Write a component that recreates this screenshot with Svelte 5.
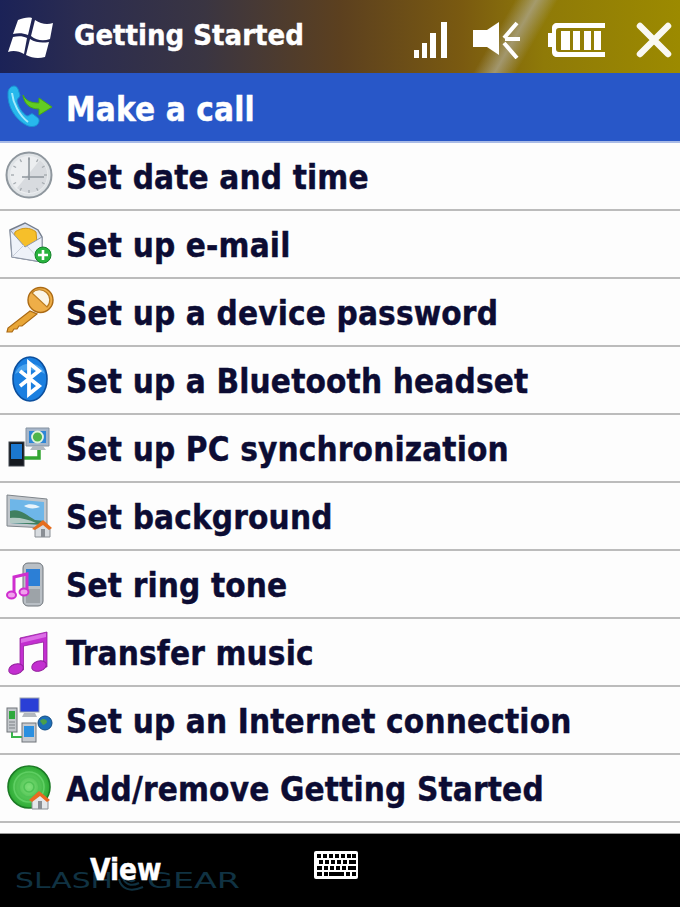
<script>
	const rows = [
		['Make a call', phone, true],
		['Set date and time', clock],
		['Set up e-mail', mail],
		['Set up a device password', key],
		['Set up a Bluetooth headset', bluetooth],
		['Set up PC synchronization', sync],
		['Set background', picture],
		['Set ring tone', ringtone],
		['Transfer music', music],
		['Set up an Internet connection', internet],
		['Add/remove Getting Started', addremove]
	];
	const ticks = [0, 30, 60, 90, 120, 150, 180, 210, 240, 270, 300, 330];
</script>

{#snippet phone()}
	<g transform="translate(0 -1)">
		<path d="M8 20c0-4 3-7 6-7 2 0 3 1 4 3l2 6c0 3-3 3-3 6 1 5 5 12 10 15 3 0 3-3 6-2l5 4c2 2 1 5-1 7-3 2-7 2-11 0C15 46 7 33 8 20z" fill="#27b8ec" stroke="#1a90d2" />
		<path d="M12 20c1 10 7 22 16 29" fill="none" stroke="#a4ebfc" stroke-width="2" />
		<path d="M23 22c3 6 8 8 16 8v-5l13 9-13 8v-6c-9 0-15-5-16-14z" fill="#62cc22" stroke="#48a818" />
	</g>
{/snippet}

{#snippet clock()}
	<circle cx="29" cy="33" r="22.500" fill="#dfe3e6" stroke="#8f979e" stroke-width="2" />
	<circle cx="29" cy="33" r="19" fill="#eceef0" />
	<path d="M17 46 40 18a19 19 0 0 1 2 28 19 19 0 0 1-25 0z" fill="#d8dbdf" />
	{#each ticks as t}
		<line x1="29" y1="15" x2="29" y2="18" stroke="#a6acb1" stroke-width="1.4" transform="rotate({t} 29 33)" />
	{/each}
	<path d="M29 16v22M22 35h22" fill="none" stroke="#8f969d" stroke-width="1.6" />
{/snippet}

{#snippet mail()}
	<path d="M10 20 25 13l13 7 4 7v25l-30-5z" fill="#d9e0ee" stroke="#747d8c" stroke-width="1.4" />
	<path d="M15 22c7-5 15-5 21 0l1 11-12 5-11-10z" fill="#f6bf2a" stroke="#cf9514" />
	<path d="M10 20 25 37l17-10v25l-30-5z" fill="#eef2f9" stroke="#8f98a8" />
	<path d="M12 47 24 35M42 52 27 36" stroke="#c6ccd8" fill="none" />
	<circle cx="43" cy="45" r="8" fill="#28b33e" stroke="#14832a" />
	<path d="M43 40v10M38 45h10" stroke="#fff" stroke-width="2.6" />
{/snippet}

{#snippet key()}
	<path d="M30 33 8 50l-1 4h5l2-3h3l2-3h3l15-12z" fill="#e8a638" stroke="#ab6a14" stroke-width="1.2" />
	<circle cx="40.500" cy="22" r="12.500" fill="#eeae48" stroke="#ab6a14" stroke-width="1.4" />
	<path d="M32 15a10 10 0 1 1 15 14z" fill="#fbf5e6" stroke="#bb7c20" stroke-width="1.2" />
{/snippet}

{#snippet bluetooth()}
	<ellipse cx="30" cy="33" rx="17" ry="22" fill="#1a7fe0" stroke="#0c4f9d" stroke-width="1.6" />
	<path d="M15 28c4-14 26-14 30 0-8-5-22-5-30 0z" fill="#63b4f4" opacity=".7" />
	<path d="m20 25 19 15-10 8V17l10 8-19 15" fill="none" stroke="#fff" stroke-width="3.8" />
{/snippet}

{#snippet sync()}
	<path d="M24 44h15V33" fill="none" stroke="#33a532" stroke-width="3.500" />
	<path d="M26 14h23v18H26z" fill="#a6b6ca" stroke="#8592a0" />
	<rect x="29" y="17" width="17" height="12" fill="#2e86d6" />
	<circle cx="37.500" cy="23" r="5.500" fill="#4eb54a" stroke="#e3f3df" stroke-width="1.8" />
	<path d="M33 32h10l3 4H30z" fill="#b3b9c0" />
	<rect x="9" y="28" width="15" height="24" fill="#15191f" stroke="#3f444c" />
	<rect x="11" y="30" width="11" height="15" fill="#1b78d0" />
{/snippet}

{#snippet picture()}
	<path d="M7 13 47 17v29L7 44z" fill="#c2c7cc" stroke="#7f858b" />
	<path d="M10 17 44 20v23L10 41z" fill="#6eb6e8" />
	<path d="M10 29c10-3 16 4 25 9l9 1v4L10 41z" fill="#3f7f60" />
	<path d="M10 36c8-1 18 1 26 5L10 41z" fill="#b2c9c4" />
	<path d="M24 24c4-3 12-2 16 1-5 2-12 2-16-1z" fill="#e9f4fb" />
	<path d="M35 46 43 39l7 7v9H35z" fill="#d8dce0" stroke="#8a8f95" />
	<path d="M41 47h4v8h-4z" fill="#8a8f95" />
	<path d="M32 47 43 38l9 8-3 2-6-5-8 5z" fill="#e66d1e" />
{/snippet}

{#snippet ringtone()}
	<rect x="23" y="13" width="20" height="43" rx="5" fill="#b9bfc5" stroke="#6e747a" />
	<rect x="26" y="19" width="14" height="17" fill="#2c7fd6" />
	<path d="M26 39h14v14H26z" fill="#9da3a8" />
	<path d="M27 40V24l-13 3v17" fill="none" stroke="#cf2ecf" stroke-width="3" />
	<ellipse cx="11.500" cy="45" rx="4.500" ry="3.500" fill="#f0a0ec" stroke="#cf2ecf" stroke-width="2" />
	<ellipse cx="24" cy="42" rx="4.500" ry="3.500" fill="#f0a0ec" stroke="#cf2ecf" stroke-width="2" />
{/snippet}

{#snippet music()}
	<path d="M20 20 47 14v35h-3.500V24l-20 4v24H20z" fill="#c32fd0" stroke="#92209c" stroke-width=".8" />
	<path d="M21 21 46 15v4l-25 6z" fill="#dc6ee6" />
	<ellipse cx="16" cy="51" rx="7.500" ry="5" fill="#c32fd0" stroke="#92209c" transform="rotate(-18 16 51)" />
	<ellipse cx="39" cy="48" rx="7.500" ry="5" fill="#c32fd0" stroke="#92209c" transform="rotate(-18 39 48)" />
{/snippet}

{#snippet internet()}
	<path d="M12 45v6h11" fill="none" stroke="#39b54a" stroke-width="2" />
	<rect x="7" y="22" width="10" height="24" fill="#c4c8cc" stroke="#70757a" />
	<rect x="9" y="25" width="6" height="8" fill="#2fa83d" />
	<path d="M9 36h6M9 39h6M9 42h6" stroke="#7c8186" />
	<rect x="20" y="12" width="19" height="14" fill="#2a3fd6" stroke="#9ba3ad" />
	<path d="M24 27h11l2 4H22z" fill="#b3b8be" />
	<rect x="22" y="37" width="14" height="19" fill="#c6cacf" stroke="#70757a" />
	<rect x="24" y="40" width="10" height="11" fill="#2a8fe0" />
	<circle cx="45" cy="37" r="7" fill="#1d6fb8" stroke="#134c84" />
	<path d="M40 35c3-3 5-2 7 0 0 3-2 3-4 4z" fill="#4aa04a" />
{/snippet}

{#snippet addremove()}
	<defs>
		<radialGradient id="disc">
			<stop offset="0" stop-color="#7fe07a" />
			<stop offset="1" stop-color="#2cab34" />
		</radialGradient>
	</defs>
	<circle cx="29" cy="33" r="21" fill="url(#disc)" stroke="#1c7a25" stroke-width="1.6" />
	<circle cx="29" cy="33" r="15" fill="none" stroke="#5fcf63" stroke-width="1.6" />
	<circle cx="29" cy="33" r="10" fill="none" stroke="#4fc254" stroke-width="1.6" />
	<circle cx="29" cy="33" r="5" fill="none" stroke="#4fc254" stroke-width="1.6" />
	<path d="M32 46 40 39l8 7v9H32z" fill="#e4e7ea" stroke="#8a8f95" />
	<path d="M38 47h4v8h-4z" fill="#8a8f95" />
	<path d="M29 46 39 37l11 9-3 2-7-6-8 6z" fill="#ea6a22" />
{/snippet}

<div class="screen">
	<header class="topbar">
		<svg class="flag" width="45" height="42" viewBox="0 0 45 42" aria-hidden="true">
			<path d="M10 3c5-2 10-3 14-2l-4 17c-5-2-10-2-15-1z" fill="#fff" />
			<path d="M27 3c6 4 12 5 18 3l-3 16c-6 2-13 2-19-3z" fill="#fff" />
			<path d="M5 20c5-1 10-1 14 1l-3 16c-5-3-11-4-16-2z" fill="#fff" />
			<path d="M22 22c6 4 13 4 19 3l-4 15c-7 2-13 1-19-2z" fill="#fff" />
		</svg>
		<h1>Getting Started</h1>
		<div class="status">
			<svg width="33" height="36" viewBox="0 0 33 36" aria-hidden="true">
				<path d="M0 28h5v8H0zM8 21h5v15H8zM16 11h6v25h-6zM27 0h6v36h-6z" fill="#fff" />
			</svg>
			<svg width="47" height="38" viewBox="0 0 47 38" aria-hidden="true">
				<path d="M0 9h14L26 1v33L14 26H0z" fill="#fff" />
				<path d="M31 17 44 2M32 18h15M31 22l13 15" stroke="#fff" stroke-width="4" fill="none" />
			</svg>
			<svg class="batt" width="57" height="34" viewBox="0 0 57 34" aria-hidden="true">
				<path d="M9 0h48v5H11c-2 0-3 1-3 3v18c0 2 1 3 3 3h46v5H9c-3 0-5-2-5-5v-5H0V10h4V5c0-3 2-5 5-5z" fill="#fff" />
				<path d="M13 8h9v19h-9zM25 8h7v19h-7zM36 8h7v19h-7zM46 8h7v19h-7z" fill="#fff" />
			</svg>
			<svg class="close" width="36" height="36" viewBox="0 0 36 36" aria-hidden="true">
				<path d="m4 4 28 28M32 4 4 32" stroke="#fff" stroke-width="6.500" stroke-linecap="round" opacity=".95" />
			</svg>
		</div>
	</header>

	<ul class="list">
		{#each rows as [label, icon, active]}
			<li class:active>
				<svg class="icon" width="66" height="66" viewBox="0 1 66 66" aria-hidden="true">
					{@render icon()}
				</svg>
				<span>{label}</span>
			</li>
		{/each}
	</ul>

	<footer class="softkeys">
		<span class="view">View</span>
		<svg class="kbd" width="46" height="31" viewBox="0 0 46 31" aria-hidden="true">
			<rect x="1" y="1" width="44" height="28" rx="2" fill="#fff" />
			<path d="M4 4h4v4H4zM10 4h4v4h-4zM16 4h4v4h-4zM22 4h4v4h-4zM28 4h4v4h-4zM34 4h4v4h-4zM39 4h4v4h-4zM6 10h4v4H6zM12 10h4v4h-4zM18 10h4v4h-4zM24 10h4v4h-4zM30 10h4v4h-4zM36 10h7v4h-7zM4 16h5v4H4zM11 16h4v4h-4zM17 16h4v4h-4zM23 16h4v4h-4zM29 16h4v4h-4zM35 16h8v4h-8zM4 22h5v4H4zM11 22h4v4h-4zM16 22h15v4H16zM33 22h4v4h-4zM39 22h4v4h-4z" fill="#000" />
		</svg>
		<svg class="mark" width="228" height="30" viewBox="0 0 228 30" aria-hidden="true">
			<text x="0" y="20" font-size="21" textLength="98" lengthAdjust="spacingAndGlyphs">SLASH</text>
			<path d="M104 11c2 9 10 14 24 8M108 10c2 6 8 9 16 5M112 10c2 3 5 4 8 2" fill="none" stroke="#103242" stroke-width="2" />
			<text x="132" y="20" font-size="21" textLength="93" lengthAdjust="spacingAndGlyphs">GEAR</text>
		</svg>
	</footer>
</div>

<style>
	:global(body) {
		background: #000;
	}
	.screen {
		width: 680px;
		height: 907px;
		display: flex;
		flex-direction: column;
		overflow: hidden;
		font-family: "DejaVu Sans Condensed", "DejaVu Sans", sans-serif;
		font-stretch: condensed;
		font-weight: 700;
		background: #fdfdfd;
	}
	.topbar {
		height: 73px;
		flex: none;
		display: flex;
		align-items: center;
		padding: 0 8px;
		box-sizing: border-box;
		color: #fff;
		background:
			linear-gradient(120deg, transparent 71.300%, rgba(175, 170, 150, 0.7) 74.300%, transparent 77.300%),
			linear-gradient(90deg, #1b2257 0%, #2b2c50 12%, #3a3542 30%, #5c401f 50%, #7a5a10 68%, #8f7a08 80%, #9c8a00 100%);
	}
	.flag {
		flex: none;
		margin-top: 3px;
	}
	h1 {
		margin: 0 0 3px 21px;
		font-size: 29px;
		font-weight: 700;
		white-space: nowrap;
		-webkit-text-stroke: 0.4px currentColor;
	}
	.status {
		margin-left: auto;
		margin-top: 7px;
		display: flex;
		align-items: center;
		gap: 26px;
	}
	.batt {
		margin-left: 2px;
	}
	.close {
		margin-left: 5px;
	}
	.list {
		flex: 1;
		margin: 0;
		padding: 0;
		list-style: none;
	}
	.list li {
		height: 68px;
		box-sizing: border-box;
		display: flex;
		align-items: center;
		border-bottom: 2px solid #bcbcbc;
		color: #0c0c33;
		font-size: 33px;
	}
	.list li.active {
		height: 70px;
		padding-top: 2px;
		background: #2857c8;
		color: #fff;
		border-bottom-color: #a9bbe6;
	}
	.icon {
		flex: none;
		align-self: flex-start;
	}
	.list span {
		margin-top: 2px;
		white-space: nowrap;
		letter-spacing: 0.15px;
		-webkit-text-stroke: 0.4px currentColor;
	}
	.softkeys {
		height: 74px;
		flex: none;
		position: relative;
		background: #000;
		border-top: 1px solid #999;
		box-sizing: border-box;
		color: #fff;
	}
	.view {
		position: absolute;
		left: 90px;
		top: 19px;
		font-size: 29.500px;
		z-index: 1;
		-webkit-text-stroke: 0.4px currentColor;
	}
	.kbd {
		position: absolute;
		left: 313px;
		top: 16px;
	}
	.mark {
		position: absolute;
		left: 15px;
		top: 34px;
		font-family: "DejaVu Sans", sans-serif;
		font-weight: 400;
		fill: #103242;
	}
</style>
